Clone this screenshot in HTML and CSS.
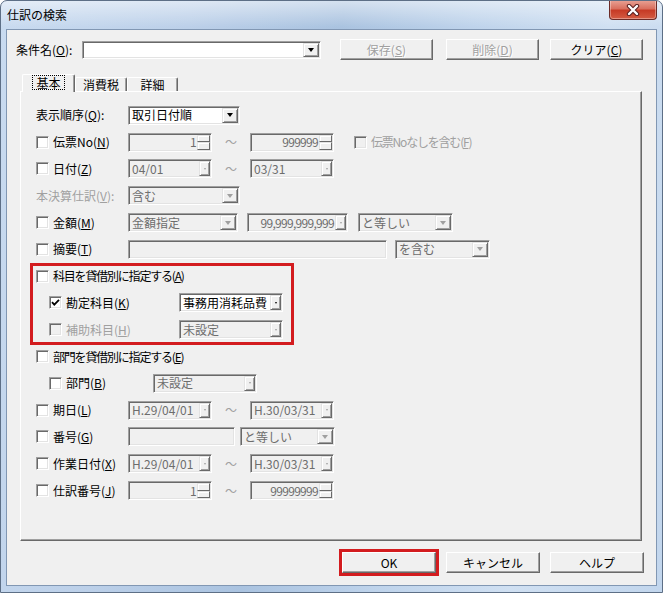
FILE: index.html
```html
<!DOCTYPE html>
<html>
<head>
    <meta charset="UTF-8">
    <title>仕訳の検索</title>

    <link rel="stylesheet" href="styles.css">
</head>
<body>
<div class="window">
    <div class="titlebar">
        <span class="title">仕訳の検索</span>
        <div class="close">
            <svg width="14" height="12" viewBox="0 0 14 12">
                <path d="M3,2 L11,10 M11,2 L3,10" stroke="#5a2020" stroke-width="4.4" stroke-linecap="round"></path>
                <path d="M3,2 L11,10 M11,2 L3,10" stroke="#fff" stroke-width="2.4" stroke-linecap="round"></path>
            </svg>
        </div>
    </div>

    <div class="client">
        <div class="toprow">
            <span class="cond">条件名(<u>O</u>):</span>
            <div class="fld wh w239"><span class="val"></span><span class="drop"><i></i></span></div>
            <div class="btn off save">保存(<u>S</u>)</div>
            <div class="btn off del">削除(<u>D</u>)</div>
            <div class="btn clr">クリア(<u>C</u>)</div>
        </div>

        <div class="tabs">
            <div class="tab on"><span class="focus">基本</span></div>
            <div class="tab t2">消費税</div>
            <div class="tab t3">詳細</div>
        </div>

        <div class="panel">
            <div class="row">
                <div class="lab">表示順序(<u>Q</u>):</div>
                <div class="fld wh w112"><span class="val">取引日付順</span><span class="drop"><i></i></span></div>
            </div>
            <div class="row">
                <div class="lab"><span class="chk"></span>伝票No(<u>N</u>)</div>
                <div class="fld w84"><span class="val num">1</span><span class="spin"><b></b><b></b></span></div>
                <span class="tilde">～</span>
                <div class="fld w84"><span class="val num">999999</span><span class="spin"><b></b><b></b></span></div>
                <span class="chk off ml20"></span><span class="dis tight">伝票Noなしを含む(<u>F</u>)</span>
            </div>
            <div class="row">
                <div class="lab"><span class="chk"></span>日付(<u>Z</u>)</div>
                <div class="fld w84"><span class="val">04/01</span><span class="drop sm"><i></i></span></div>
                <span class="tilde">～</span>
                <div class="fld w84"><span class="val">03/31</span><span class="drop sm"><i></i></span></div>
            </div>
            <div class="row">
                <div class="lab dis">本決算仕訳(<u>V</u>):</div>
                <div class="fld w112"><span class="val">含む</span><span class="drop off"><i></i></span></div>
            </div>
            <div class="row">
                <div class="lab"><span class="chk"></span>金額(<u>M</u>)</div>
                <div class="fld w110"><span class="val">金額指定</span><span class="drop off"><i></i></span></div>
                <div class="fld w101 ml9"><span class="val num">99,999,999,999</span><span class="drop sm"><i></i></span></div>
                <div class="fld w95 ml10"><span class="val">と等しい</span><span class="drop off"><i></i></span></div>
            </div>
            <div class="row">
                <div class="lab"><span class="chk"></span>摘要(<u>T</u>)</div>
                <div class="fld w259"><span class="val"></span></div>
                <div class="fld w95 ml8"><span class="val">を含む</span><span class="drop off"><i></i></span></div>
            </div>

            <div class="mark">
                <div class="row">
                    <div class="lab wide"><span class="chk"></span><span class="tight">科目を貸借別に指定する(<u>A</u>)</span></div>
                </div>
                <div class="row">
                    <div class="lab ind l130"><span class="chk"><svg width="11" height="11" viewBox="0 0 11 11"><path d="M2,5.2 L4.3,7.6 L9,2.8" fill="none" stroke="#000" stroke-width="1.8"></path></svg></span>勘定科目(<u>K</u>)</div>
                    <div class="fld wh w104"><span class="val">事務用消耗品費</span><span class="drop sm blk"><i></i></span></div>
                </div>
                <div class="row">
                    <div class="lab ind l130 dis"><span class="chk off"></span>補助科目(<u>H</u>)</div>
                    <div class="fld w104"><span class="val">未設定</span><span class="drop sm"><i></i></span></div>
                </div>
            </div>

            <div class="row">
                <div class="lab wide"><span class="chk"></span><span class="tight">部門を貸借別に指定する(<u>E</u>)</span></div>
            </div>
            <div class="row">
                <div class="lab ind l104"><span class="chk"></span>部門(<u>B</u>)</div>
                <div class="fld w104"><span class="val">未設定</span><span class="drop sm"><i></i></span></div>
            </div>
            <div class="row">
                <div class="lab"><span class="chk"></span>期日(<u>L</u>)</div>
                <div class="fld w84"><span class="val">H.29/04/01</span><span class="drop sm"><i></i></span></div>
                <span class="tilde">～</span>
                <div class="fld w84"><span class="val">H.30/03/31</span><span class="drop sm"><i></i></span></div>
            </div>
            <div class="row">
                <div class="lab"><span class="chk"></span>番号(<u>G</u>)</div>
                <div class="fld w107"><span class="val"></span></div>
                <div class="fld w95 ml5"><span class="val">と等しい</span><span class="drop off"><i></i></span></div>
            </div>
            <div class="row">
                <div class="lab"><span class="chk"></span>作業日付(<u>X</u>)</div>
                <div class="fld w84"><span class="val">H.29/04/01</span><span class="drop sm"><i></i></span></div>
                <span class="tilde">～</span>
                <div class="fld w84"><span class="val">H.30/03/31</span><span class="drop sm"><i></i></span></div>
            </div>
            <div class="row">
                <div class="lab"><span class="chk"></span>仕訳番号(<u>J</u>)</div>
                <div class="fld w84"><span class="val num">1</span><span class="spin"><b></b><b></b></span></div>
                <span class="tilde">～</span>
                <div class="fld w84"><span class="val num">99999999</span><span class="spin"><b></b><b></b></span></div>
            </div>
        </div>

        <div class="bottom">
            <div class="btn ok">OK</div>
            <div class="btn">キャンセル</div>
            <div class="btn">ヘルプ</div>
        </div>
    </div>
</div>
</body>
</html>
```

FILE: styles.css
```css
* {
    box-sizing: border-box;
}

body {
    margin: 0;
    background: #fff;
    color: #000;
    font-family: "Noto Sans CJK JP", "Noto Sans", sans-serif;
    font-size: 12px;
    line-height: 16px;
}

u {
    text-decoration: underline;
    text-underline-offset: 1px;
}

.tight {
    letter-spacing: -1.2px;
}

/* window frame */

.window {
    width: 663px;
    height: 593px;
    display: flex;
    flex-direction: column;

    border: 1px solid #5d6f86;
    border-radius: 7px 7px 0 0;
    background:
        linear-gradient(180deg, rgba(255,255,255,0.5), rgba(255,255,255,0) 26px),
        linear-gradient(100deg, #c9dbf0 0%, #bcd0e9 25%, #aac3e0 45%, #bed3eb 62%, #d0e0f2 80%, #c2d6ed 100%);
    overflow: hidden;
}

.titlebar {
    height: 28px;
    display: flex;
    align-items: flex-start;
    padding-left: 6px;
}

.title {
    margin-top: 6px;
}

.close {
    margin-left: auto;
    margin-right: 5px;
    margin-top: -1px;
    width: 48px;
    height: 20px;
    display: flex;
    align-items: center;
    justify-content: center;

    border: 1px solid #6b2b27;
    border-top: none;
    border-radius: 0 0 4px 4px;
    background: linear-gradient(180deg, #e9a497 0%, #d9705f 45%, #c63b26 55%, #d45c43 100%);
    box-shadow: inset 0 0 0 1px rgba(255,255,255,0.35);
}

.client {
    flex: 1;
    margin: 0 5px 6px 5px;

    background: #f0f0f0;
    border: 1px solid #8197b3;
}

/* top row */

.toprow {
    height: 21px;
    margin-top: 9px;
    padding-left: 9px;
    display: flex;
    align-items: center;
}

.cond {
    width: 66px;
    flex: none;
}

.btn {
    width: 93px;
    height: 21px;
    flex: none;
    display: flex;
    align-items: center;
    justify-content: center;

    color: #000;
    background: #f0f0f0;
    border: 1px solid;
    border-color: #fff #696969 #696969 #fff;
    box-shadow: inset -1px -1px 0 #a0a0a0;
}

.btn.off {
    color: #a0a0a0;
    text-shadow: 1px 1px 0 #fff;
}

.save {
    margin-left: 19px;
}

.del {
    margin-left: 13px;
}

.clr {
    margin-left: 11px;
}

/* tabs */

.tabs {
    height: 19px;
    margin-top: 13px;
    margin-left: 15px;
    margin-bottom: -1px;
    display: flex;
    align-items: flex-end;
    position: relative;
    z-index: 1;
}

.tab {
    width: 52px;
    height: 14px;
    margin-bottom: 1px;
    display: flex;
    align-items: center;
    justify-content: center;

    border: 1px solid;
    border-color: #fff #696969 transparent #fff;
    border-bottom: none;
    border-radius: 2px 2px 0 0;
    box-shadow: inset -1px 0 0 #a0a0a0;
}

.tab.on {
    width: 53px;
    height: 18px;
    margin-bottom: 0;
    background: #f0f0f0;
    padding-bottom: 2px;
}

.tab.t3 {
    width: 51px;
}

.focus {
    padding: 0 3px;
    line-height: 13px;
    outline: 1px dotted #000;
    outline-offset: 0;
}

/* tab page */

.panel {
    width: 622px;
    height: 450px;
    margin-left: 13px;
    padding: 10px 0 0 15px;

    border: 1px solid;
    border-color: #fff #696969 #696969 #fff;
    box-shadow: inset -1px -1px 0 #a0a0a0;
}

.row {
    height: 26.8px;
    display: flex;
    align-items: center;
}

.lab {
    width: 92px;
    flex: none;
    display: flex;
    align-items: center;
    white-space: nowrap;
}

.lab.wide {
    width: auto;
}

.lab.ind {
    padding-left: 13px;
}

.l130 {
    width: 143px;
}

.l104 {
    width: 117px;
}

.dis {
    color: #a0a0a0;
}

.mark {
    width: 264px;
    margin-left: -6px;
    padding-left: 6px;
    margin-bottom: -2px;
    padding-bottom: 2px;
    outline: 3px solid #d31c1f;
    outline-offset: -3px;
}

/* check boxes */

.chk {
    width: 13px;
    height: 13px;
    flex: none;
    margin-right: 4px;
    display: flex;
    align-items: center;
    justify-content: center;

    background: #fff;
    border: 1px solid;
    border-color: #a0a0a0 #fff #fff #a0a0a0;
    box-shadow: inset 1px 1px 0 #696969, inset -1px -1px 0 #e3e3e3;
}

.chk.off {
    background: #f0f0f0;
}

.chk svg {
    display: block;
}

/* edit fields */

.fld {
    height: 19px;
    flex: none;
    display: flex;
    align-items: center;
    padding-left: 3px;

    color: #6d6d6d;
    background: #f0f0f0;
    border: 1px solid;
    border-color: #a0a0a0 #fff #fff #a0a0a0;
    box-shadow: inset 1px 1px 0 #696969, inset -1px -1px 0 #e3e3e3;
    white-space: nowrap;
}

.fld.wh {
    color: #000;
    background: #fff;
}

.val {
    flex: 1;
    min-width: 0;
}

.val.num {
    text-align: right;
    padding-right: 1px;
    letter-spacing: -0.7px;
}

.w84 { width: 84px; }
.w95 { width: 95px; }
.w101 { width: 101px; }
.w104 { width: 104px; }
.w107 { width: 107px; }
.w110 { width: 110px; }
.w112 { width: 112px; }
.w239 { width: 239px; height: 18px; }
.w259 { width: 259px; }

.ml5 { margin-left: 5px; }
.ml8 { margin-left: 8px; }
.ml9 { margin-left: 9px; }
.ml10 { margin-left: 10px; }
.ml20 { margin-left: 20px; }

.tilde {
    width: 38px;
    flex: none;
    text-align: center;
    color: #a0a0a0;
}

.drop {
    width: 16px;
    height: 15px;
    flex: none;
    margin-right: 1px;
    display: flex;
    align-items: center;
    justify-content: center;

    background: #f0f0f0;
    border: 1px solid;
    border-color: #e3e3e3 #696969 #696969 #e3e3e3;
    box-shadow: inset 1px 1px 0 #fff, inset -1px -1px 0 #a0a0a0;
}

.w239 .drop {
    height: 14px;
}

.drop i {
    width: 0;
    height: 0;
    border-style: solid;
    border-width: 4px 3.5px 0;
    border-color: #000 transparent transparent;
}

.drop.off i {
    border-top-color: #a0a0a0;
}

.drop.sm {
    width: 11px;
}

.drop.sm i {
    border-width: 2px 1.5px 0;
    border-top-color: #a0a0a0;
}

.drop.sm.blk i {
    border-top-color: #000;
}

.spin {
    width: 13px;
    height: 15px;
    flex: none;
    margin-right: 1px;
    display: flex;
    flex-direction: column;
}

.spin b {
    flex: 1;
    background: #f0f0f0;
    border: 1px solid;
    border-color: #e3e3e3 #696969 #696969 #e3e3e3;
    box-shadow: inset 1px 1px 0 #fff;
}

/* bottom buttons */

.bottom {
    margin-top: 11px;
    padding-right: 12px;
    display: flex;
    justify-content: flex-end;
    gap: 10px;
}

.bottom .btn {
    width: 94px;
}

.ok {
    outline: 3px solid #d31c1f;
}
```
